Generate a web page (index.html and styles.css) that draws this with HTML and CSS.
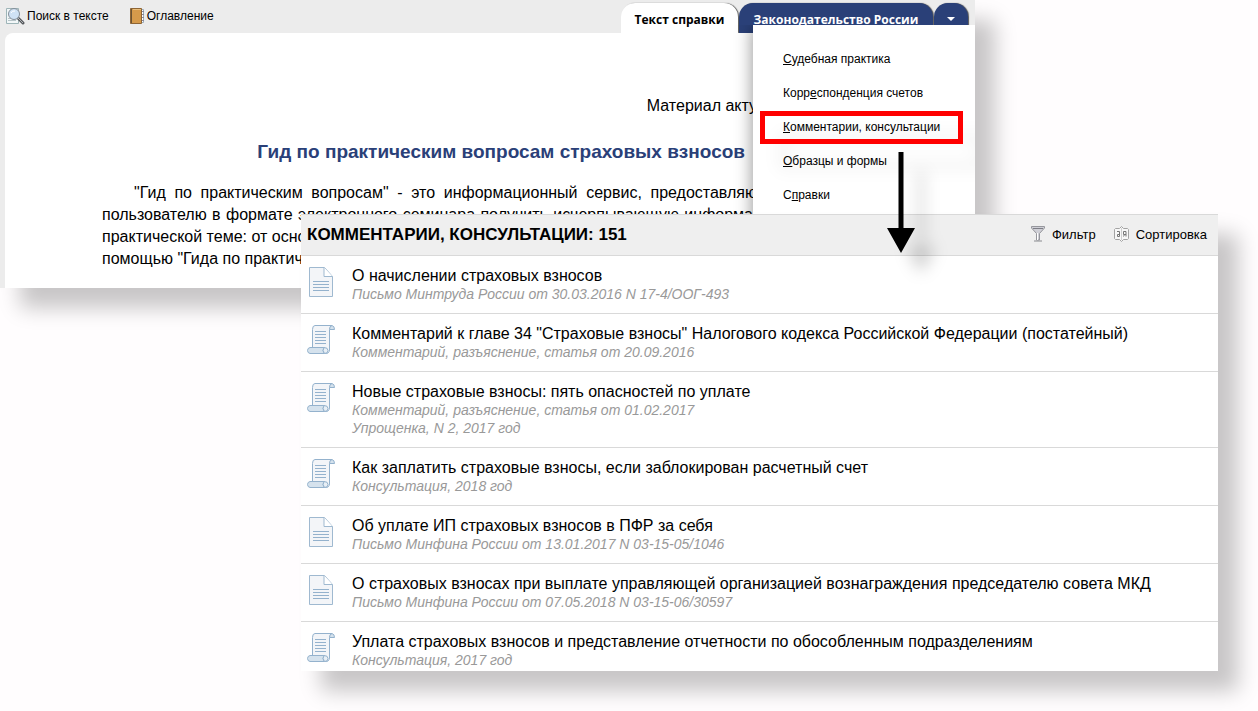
FILE: index.html
```html
<!DOCTYPE html>
<html lang="ru">
<head>
<meta charset="utf-8">
<title>Гид по практическим вопросам</title>
<link rel="stylesheet" href="styles.css">
</head>
<body>
<svg class="defs" width="0" height="0" aria-hidden="true">
  <symbol id="icon-page" viewBox="0 0 28 32">
    <path d="M2.500 1.500H17.500L25.500 10.500V30.500H2.500Z" fill="#f3f5f8" stroke="#9fb9d0"/>
    <path d="M17 1.500V10.500H25.500" fill="#fff" stroke="#9fb9d0"/>
    <path d="M6 15.500H22M6 18.500H22M6 21.500H22M6 24.500H22" stroke="#94b2cd"/>
  </symbol>
  <symbol id="icon-scroll" viewBox="0 0 28 32">
    <path d="M22.500 5.500V2.500Q23 1.500 25 1.500Q27.500 2 27.500 5.500Z" fill="#d5e2ed" stroke="#94b2cd"/>
    <path d="M5.500 25V5.500Q5.500 1.500 8 1.500H25Q22.500 2 22.500 5.500V26Q22 30 18 29.500H6Z" fill="#f3f5f8" stroke="#94b2cd"/>
    <path d="M3 23.500H17Q15 26.500 17 29.500H3Q.500 29 .500 26.500T3 23.500Z" fill="#d5e2ed" stroke="#94b2cd"/>
    <path d="M17 23.500Q21 23.500 21 26.500T17.500 29.500M17 23.500Q15 26.500 17.500 29.500" fill="#e8eff5" stroke="#94b2cd"/>
    <path d="M8 7.500H19M8 10.500H19M8 13.500H19M8 16.500H19M8 19.500H19" stroke="#94b2cd"/>
  </symbol>
</svg>

<main class="stage">
  <section class="doc">
    <header class="doc-bar">
      <nav class="tools">
        <button class="tool" type="button">
          <svg width="19" height="18" viewBox="0 0 19 18" aria-hidden="true">
            <path d="M.500 1.500H12.500V16.500H.500Z" fill="#f2f7f8" stroke="#9eb5b8"/>
            <path d="M2 11.500H9M2 13.500H10" stroke="#b7c4c8"/>
            <path d="M12 11L17 16" stroke="#55585c" stroke-width="3" stroke-linecap="round"/>
            <path d="M12 11L17 16" stroke="#aeb2b5"/>
            <circle cx="8" cy="7" r="5.500" fill="#cfe2f5" stroke="#858f99"/>
            <path d="M5 6Q6 3.500 9 4" fill="none" stroke="#fff"/>
          </svg>
          Поиск в тексте
        </button>
        <button class="tool" type="button">
          <svg width="15" height="18" viewBox="0 0 15 18" aria-hidden="true">
            <path d="M10 2.500H13.500V15.500H10Z" fill="#fff" stroke="#9ab"/>
            <path d="M12 4.500H14M12 7.500H14M12 10.500H14M12 13.500H14" stroke="#889"/>
            <path d="M.500 1.500H11.500V16.500H.500Z" fill="#d69a4b" stroke="#8e6535"/>
            <path d="M1.500 2V16" stroke="#6b5233"/>
            <path d="M3 2.500H11" stroke="#e9bd79"/>
          </svg>
          Оглавление
        </button>
      </nav>
      <nav class="tabs">
        <button class="tab tab-active" type="button">Текст справки</button>
        <button class="tab tab-law" type="button">Законодательство России</button>
        <button class="tab tab-more" type="button" aria-label="Ещё"><svg width="8" height="4" viewBox="0 0 8 4" aria-hidden="true"><path d="M0 0H8L4 4Z" fill="#fff"/></svg></button>
      </nav>
    </header>
    <article class="doc-page">
      <p class="doc-date">Материал акту</p>
      <h1 class="doc-title">Гид по практическим вопросам страховых взносов</h1>
      <p class="doc-text">
        <span class="line line-first">"Гид по практическим вопросам" - это информационный сервис, предоставляю</span>
        <span class="line line-second">пользователю в формате электронного семинара получить исчерпывающую информа</span>
        <span class="line line-short">практической теме: от осно</span>
        <span class="line line-short">помощью "Гида по практиче</span>
      </p>
    </article>
    <div class="menu">
      <a class="menu-item" href="#"><u>С</u>удебная практика</a>
      <a class="menu-item" href="#">Корр<u>е</u>спонденция счетов</a>
      <a class="menu-item" href="#"><u>К</u>омментарии, консультации</a>
      <a class="menu-item" href="#"><u>О</u>бразцы и формы</a>
      <a class="menu-item" href="#">С<u>п</u>равки</a>
      <span class="menu-mark"></span>
    </div>
  </section>

  <section class="results">
    <header class="results-bar">
      <h2 class="results-title">КОММЕНТАРИИ, КОНСУЛЬТАЦИИ: 151</h2>
      <button class="action" type="button">
        <svg width="14" height="16" viewBox="0 0 14 16" aria-hidden="true">
          <path d="M.500 .500H13.500V2L8.500 7.500V14H5.500V7.500L.500 2Z" fill="#cfcfd6" stroke="#96979d"/>
          <path d="M3 15H11" stroke="#8a8b90"/>
          <path d="M2 2.500H12" stroke="#7d7e86"/>
          <path d="M6.500 7V14" stroke="#fff"/>
        </svg>
        Фильтр
      </button>
      <button class="action" type="button">
        <svg width="15" height="16" viewBox="0 0 15 16" aria-hidden="true">
          <path d="M1.500 2.500H5.500L7.500 .500L9.500 2.500H13.500L14.500 3.500V12.500L13.500 13.500H9.500L7.500 15.500L5.500 13.500H1.500L.500 12.500V3.500Z" fill="#f8f8f8" stroke="#a3a3a3"/>
          <path d="M7.500 2V14" stroke="#d0d0d0"/>
          <path d="M3 5.500H5.500V10.500H3.500V8.500H5.500M12 10.500V5.500H9.500V8.500H12M10.500 8.500L9.500 10.500" fill="none" stroke="#777"/>
        </svg>
        Сортировка
      </button>
    </header>
    <ul class="list">
      <li class="row"><svg class="row-icon" aria-hidden="true"><use href="#icon-page"/></svg><div><a class="row-title" href="#">О начислении страховых взносов</a><p class="row-note">Письмо Минтруда России от 30.03.2016 N 17-4/ООГ-493</p></div></li>
      <li class="row"><svg class="row-icon" aria-hidden="true"><use href="#icon-scroll"/></svg><div><a class="row-title" href="#">Комментарий к главе 34 "Страховые взносы" Налогового кодекса Российской Федерации (постатейный)</a><p class="row-note">Комментарий, разъяснение, статья от 20.09.2016</p></div></li>
      <li class="row"><svg class="row-icon" aria-hidden="true"><use href="#icon-scroll"/></svg><div><a class="row-title" href="#">Новые страховые взносы: пять опасностей по уплате</a><p class="row-note">Комментарий, разъяснение, статья от 01.02.2017</p><p class="row-note">Упрощенка, N 2, 2017 год</p></div></li>
      <li class="row"><svg class="row-icon" aria-hidden="true"><use href="#icon-scroll"/></svg><div><a class="row-title" href="#">Как заплатить страховые взносы, если заблокирован расчетный счет</a><p class="row-note">Консультация, 2018 год</p></div></li>
      <li class="row"><svg class="row-icon" aria-hidden="true"><use href="#icon-page"/></svg><div><a class="row-title" href="#">Об уплате ИП страховых взносов в ПФР за себя</a><p class="row-note">Письмо Минфина России от 13.01.2017 N 03-15-05/1046</p></div></li>
      <li class="row"><svg class="row-icon" aria-hidden="true"><use href="#icon-page"/></svg><div><a class="row-title" href="#">О страховых взносах при выплате управляющей организацией вознаграждения председателю совета МКД</a><p class="row-note">Письмо Минфина России от 07.05.2018 N 03-15-06/30597</p></div></li>
      <li class="row"><svg class="row-icon" aria-hidden="true"><use href="#icon-scroll"/></svg><div><a class="row-title" href="#">Уплата страховых взносов и представление отчетности по обособленным подразделениям</a><p class="row-note">Консультация, 2017 год</p></div></li>
    </ul>
  </section>

  <svg class="arrow" width="28" height="101" viewBox="0 0 28 101" aria-hidden="true">
    <path d="M11.500 0H16.500V76H28L14 101L0 76H11.500Z"/>
  </svg>
</main>
</body>
</html>
```

FILE: styles.css
```css
* { box-sizing: border-box; }
body {
  margin: 0;
  background: #fffdfe;
  color: #000;
  font-family: "Liberation Sans", Arial, sans-serif;
}
h1, h2, p, ul { margin: 0; padding: 0; }
button { border: 0; padding: 0; background: none; color: inherit; font-family: inherit; }
a { color: inherit; text-decoration: none; }
.defs { display: block; }

.stage { position: relative; padding-bottom: 40px; }

/* Document window */
.doc {
  position: relative;
  height: 288px;
  margin-right: 283px;
  padding-left: 5px;
  background: #ececec;
  box-shadow: 20px 20px 20px rgba(0, 0, 0, .22);
}
.doc-bar { display: flex; justify-content: space-between; height: 33px; padding-right: 7px; }
.tools { display: flex; align-items: center; gap: 20px; height: 31px; }
.tool { display: flex; align-items: center; gap: 2px; padding-left: 1px; font-size: 12px; }
.tabs { display: flex; align-items: flex-end; gap: 1px; }
.tab {
  height: 30px;
  padding-top: 2px;
  border-radius: 14px 14px 0 0;
  background: #2a4078;
  box-shadow: 1px 0 1px #555;
  color: #fff;
  font: bold 12px "Open Sans", sans-serif;
}
.tab-active { width: 117px; background: #fff; color: #000; }
.tab-law { width: 194px; }
.tab-more { width: 34px; }
.tab-more svg { display: block; margin: 0 auto; }

.doc-page {
  position: relative;
  height: 255px;
  padding: 62px 218px 0 97px;
  border-radius: 8px 0 0 0;
  background: #fff;
  font-size: 16px;
  line-height: 22px;
}
.doc-date { text-align: right; }
.doc-title { margin-top: 23px; padding-right: 12px; color: #2a4078; font-size: 19px; line-height: 24px; text-align: right; }
.doc-text { margin-top: 18px; }
.line { display: block; text-align: justify; text-align-last: justify; white-space: nowrap; }
.line-first { text-indent: 32px; }
.line-second { padding-right: 4px; }
.line-short { text-align-last: left; }

.menu {
  position: absolute;
  top: 25px;
  right: 0;
  width: 222px;
  height: 263px;
  padding: 17px 0 0 30px;
  background: #fff;
  box-shadow: -1px 0 16px rgba(0, 0, 0, .4);
  clip-path: inset(0 0 0 -20px);
}
.menu-item { display: block; font-size: 12px; line-height: 34px; }
.menu-mark {
  position: absolute;
  top: 86px;
  left: 7px;
  width: 203px;
  height: 33px;
  border: 5px solid #f00;
  filter: drop-shadow(20px 24px 8px rgba(0, 0, 0, .08));
}

/* Search results window, laid over the foot of the document */
.results {
  position: relative;
  margin: -74px 40px 0 301px;
  background: #fff;
  box-shadow: 20px 20px 20px rgba(0, 0, 0, .22);
}
.results-bar {
  display: flex;
  align-items: center;
  gap: 18px;
  height: 42px;
  padding: 0 11px 0 6px;
  border: solid #d9d9d9;
  border-width: 1px 0;
  background: #efefef;
}
.results-title { margin-right: auto; font-size: 17px; }
.action { display: flex; align-items: center; gap: 7px; padding-bottom: 2px; font-size: 13px; }
.list { list-style: none; }
.row {
  display: flex;
  gap: 17px;
  padding: 10px 8px 10px 6px;
  border-bottom: 1px solid #d9d9d9;
}
.row:last-child { padding-bottom: 2px; border-bottom: 0; }
.row-icon { flex: none; width: 28px; height: 32px; }
.row-title { display: block; font-size: 16px; line-height: 19px; }
.row-note { color: #999; font-size: 14px; font-style: italic; line-height: 18px; }

.arrow {
  position: absolute;
  top: 152px;
  left: 887px;
  overflow: visible;
  filter: drop-shadow(20px 20px 8px rgba(0, 0, 0, .2));
}
```
